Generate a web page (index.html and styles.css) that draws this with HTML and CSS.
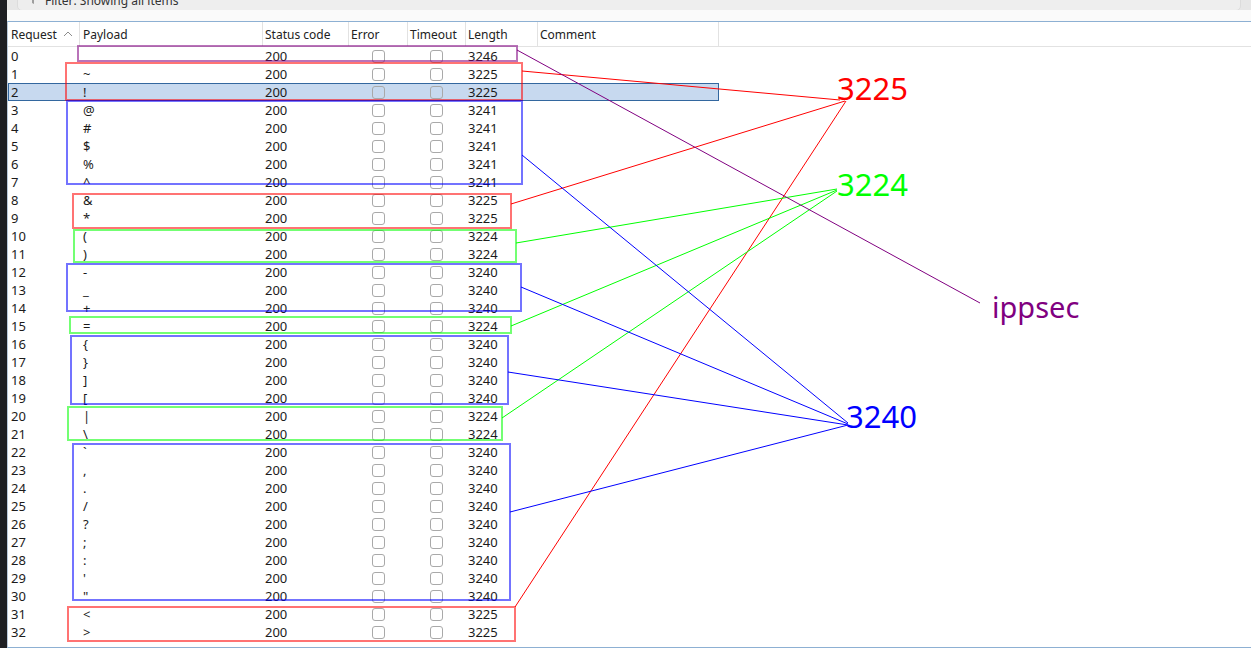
FILE: index.html
```html
<!DOCTYPE html>
<html>
<head>
<meta charset="utf-8">
<link rel="stylesheet" href="styles.css">
</head>
<body>
<div class="app">
  <div class="edge"></div>
  <div class="main">
    <div class="filterbar">
      <div class="filter">
        <svg class="funnel" width="6" height="10" viewBox="0 0 6 10"><path d="M0.5 0.5 H5.5 L3.8 4 V9 L2.2 8 V4 Z" fill="#8a8a8a"/></svg>
        <span>Filter: Showing all items</span>
      </div>
    </div>
    <div class="gap"></div>
    <div class="table">
      <div class="thead">
        <div class="th">Request<svg class="sort" width="10" height="6" viewBox="0 0 10 6"><polyline points="1,5 5,1 9,5" fill="none" stroke="#8c8c8c" stroke-width="1"/></svg></div>
        <div class="th">Payload</div>
        <div class="th tight">Status code</div>
        <div class="th tight">Error</div>
        <div class="th tight">Timeout</div>
        <div class="th tight">Length</div>
        <div class="th tight">Comment</div>
        <div class="th filler"></div>
      </div>
      <div class="tbody">
        <div class="row"><span>0</span><span></span><span>200</span><span class="cb"><i></i></span><span class="cb"><i></i></span><span>3246</span><span></span></div>
        <div class="row"><span>1</span><span>~</span><span>200</span><span class="cb"><i></i></span><span class="cb"><i></i></span><span>3225</span><span></span></div>
        <div class="row sel"><span>2</span><span>!</span><span>200</span><span class="cb"><i></i></span><span class="cb"><i></i></span><span>3225</span><span></span></div>
        <div class="row"><span>3</span><span>@</span><span>200</span><span class="cb"><i></i></span><span class="cb"><i></i></span><span>3241</span><span></span></div>
        <div class="row"><span>4</span><span>#</span><span>200</span><span class="cb"><i></i></span><span class="cb"><i></i></span><span>3241</span><span></span></div>
        <div class="row"><span>5</span><span>$</span><span>200</span><span class="cb"><i></i></span><span class="cb"><i></i></span><span>3241</span><span></span></div>
        <div class="row"><span>6</span><span>%</span><span>200</span><span class="cb"><i></i></span><span class="cb"><i></i></span><span>3241</span><span></span></div>
        <div class="row"><span>7</span><span>^</span><span>200</span><span class="cb"><i></i></span><span class="cb"><i></i></span><span>3241</span><span></span></div>
        <div class="row"><span>8</span><span>&amp;</span><span>200</span><span class="cb"><i></i></span><span class="cb"><i></i></span><span>3225</span><span></span></div>
        <div class="row"><span>9</span><span>*</span><span>200</span><span class="cb"><i></i></span><span class="cb"><i></i></span><span>3225</span><span></span></div>
        <div class="row"><span>10</span><span>(</span><span>200</span><span class="cb"><i></i></span><span class="cb"><i></i></span><span>3224</span><span></span></div>
        <div class="row"><span>11</span><span>)</span><span>200</span><span class="cb"><i></i></span><span class="cb"><i></i></span><span>3224</span><span></span></div>
        <div class="row"><span>12</span><span>-</span><span>200</span><span class="cb"><i></i></span><span class="cb"><i></i></span><span>3240</span><span></span></div>
        <div class="row"><span>13</span><span>_</span><span>200</span><span class="cb"><i></i></span><span class="cb"><i></i></span><span>3240</span><span></span></div>
        <div class="row"><span>14</span><span>+</span><span>200</span><span class="cb"><i></i></span><span class="cb"><i></i></span><span>3240</span><span></span></div>
        <div class="row"><span>15</span><span>=</span><span>200</span><span class="cb"><i></i></span><span class="cb"><i></i></span><span>3224</span><span></span></div>
        <div class="row"><span>16</span><span>{</span><span>200</span><span class="cb"><i></i></span><span class="cb"><i></i></span><span>3240</span><span></span></div>
        <div class="row"><span>17</span><span>}</span><span>200</span><span class="cb"><i></i></span><span class="cb"><i></i></span><span>3240</span><span></span></div>
        <div class="row"><span>18</span><span>]</span><span>200</span><span class="cb"><i></i></span><span class="cb"><i></i></span><span>3240</span><span></span></div>
        <div class="row"><span>19</span><span>[</span><span>200</span><span class="cb"><i></i></span><span class="cb"><i></i></span><span>3240</span><span></span></div>
        <div class="row"><span>20</span><span>|</span><span>200</span><span class="cb"><i></i></span><span class="cb"><i></i></span><span>3224</span><span></span></div>
        <div class="row"><span>21</span><span>\</span><span>200</span><span class="cb"><i></i></span><span class="cb"><i></i></span><span>3224</span><span></span></div>
        <div class="row"><span>22</span><span>`</span><span>200</span><span class="cb"><i></i></span><span class="cb"><i></i></span><span>3240</span><span></span></div>
        <div class="row"><span>23</span><span>,</span><span>200</span><span class="cb"><i></i></span><span class="cb"><i></i></span><span>3240</span><span></span></div>
        <div class="row"><span>24</span><span>.</span><span>200</span><span class="cb"><i></i></span><span class="cb"><i></i></span><span>3240</span><span></span></div>
        <div class="row"><span>25</span><span>/</span><span>200</span><span class="cb"><i></i></span><span class="cb"><i></i></span><span>3240</span><span></span></div>
        <div class="row"><span>26</span><span>?</span><span>200</span><span class="cb"><i></i></span><span class="cb"><i></i></span><span>3240</span><span></span></div>
        <div class="row"><span>27</span><span>;</span><span>200</span><span class="cb"><i></i></span><span class="cb"><i></i></span><span>3240</span><span></span></div>
        <div class="row"><span>28</span><span>:</span><span>200</span><span class="cb"><i></i></span><span class="cb"><i></i></span><span>3240</span><span></span></div>
        <div class="row"><span>29</span><span>'</span><span>200</span><span class="cb"><i></i></span><span class="cb"><i></i></span><span>3240</span><span></span></div>
        <div class="row"><span>30</span><span>"</span><span>200</span><span class="cb"><i></i></span><span class="cb"><i></i></span><span>3240</span><span></span></div>
        <div class="row"><span>31</span><span>&lt;</span><span>200</span><span class="cb"><i></i></span><span class="cb"><i></i></span><span>3225</span><span></span></div>
        <div class="row"><span>32</span><span>&gt;</span><span>200</span><span class="cb"><i></i></span><span class="cb"><i></i></span><span>3225</span><span></span></div>
      </div>
    </div>
  </div>
</div>
<svg class="annot" width="1251" height="648" viewBox="0 0 1251 648">
  <g fill="none" stroke-width="2" stroke-opacity="0.55">
    <rect x="78" y="46" width="439" height="15" stroke="#800080"/>
    <rect x="66" y="63" width="456" height="37" stroke="#ff0000"/>
    <rect x="67" y="101" width="455" height="83" stroke="#0000ff"/>
    <rect x="73" y="194" width="438" height="34" stroke="#ff0000"/>
    <rect x="74" y="230" width="442" height="32" stroke="#00ff00"/>
    <rect x="67" y="264" width="454" height="47" stroke="#0000ff"/>
    <rect x="70" y="317" width="441" height="16" stroke="#00ff00"/>
    <rect x="71" y="336" width="437" height="68" stroke="#0000ff"/>
    <rect x="68" y="407" width="434" height="33" stroke="#00ff00"/>
    <rect x="73" y="444" width="437" height="156" stroke="#0000ff"/>
    <rect x="68" y="607" width="447" height="34" stroke="#ff0000"/>
  </g>
  <g stroke-width="1" fill="none">
    <line x1="522" y1="71" x2="840" y2="100" stroke="#ff0000"/>
    <line x1="511" y1="204" x2="845" y2="101" stroke="#ff0000"/>
    <line x1="515" y1="607" x2="846" y2="101" stroke="#ff0000"/>
    <line x1="516" y1="243" x2="837" y2="189" stroke="#00ff00"/>
    <line x1="511" y1="326" x2="837" y2="190" stroke="#00ff00"/>
    <line x1="502" y1="418" x2="837" y2="191" stroke="#00ff00"/>
    <line x1="522" y1="155" x2="848" y2="423" stroke="#0000ff"/>
    <line x1="521" y1="287" x2="848" y2="424" stroke="#0000ff"/>
    <line x1="508" y1="372" x2="848" y2="425" stroke="#0000ff"/>
    <line x1="510" y1="512" x2="848" y2="425" stroke="#0000ff"/>
    <line x1="517" y1="50" x2="980" y2="303" stroke="#800080"/>
  </g>
  <text class="lbl" x="837" y="100" fill="#ff0000">3225</text>
  <text class="lbl" x="837" y="196" fill="#00ff00">3224</text>
  <text class="lbl" x="846" y="428" fill="#0000ff">3240</text>
  <text class="lbl small" x="992" y="318" fill="#800080">ippsec</text>
</svg>
</body>
</html>
```

FILE: styles.css
```css
html, body {
  margin: 0;
  padding: 0;
  overflow: hidden;
}

body {
  position: relative;
  width: 1251px;
  height: 648px;
  font-family: "Noto Sans", "Open Sans", sans-serif;
  color: #1b1b1b;
  background: #ffffff;
}

.app {
  display: flex;
  height: 648px;
}

.edge {
  width: 7px;
  flex: none;
  background: #1e1f23;
}

.main {
  flex: 1;
  display: flex;
  flex-direction: column;
  min-width: 0;
}

.filterbar {
  height: 10px;
  flex: none;
  overflow: hidden;
  background: #e7e7e7;
  padding: 0 10px;
}

.filter {
  margin-top: -11px;
  height: 20px;
  background: #eeeeee;
  border: 1px solid #dcdcdc;
  border-radius: 5px;
  display: flex;
  align-items: center;
  padding-left: 12px;
  font-size: 12px;
  color: #333;
}

.funnel {
  margin-right: 9px;
}

.gap {
  height: 11px;
  flex: none;
  background: #fafafa;
}

.table {
  flex: 1;
  border-top: 1px solid #8db0d3;
  border-bottom: 1px solid #8db0d3;
  border-left: 1px solid #b9c9db;
  background: #ffffff;
}

.thead {
  display: grid;
  grid-template-columns: 72px 183px 86px 59px 58px 72px 181px 1fr;
  height: 24px;
  border-bottom: 1px solid #e2e2e2;
  font-size: 12px;
  color: #222;
}

.th {
  display: flex;
  align-items: center;
  padding-left: 3px;
  border-right: 1px solid #e2e2e2;
  white-space: nowrap;
}

.th.tight {
  padding-left: 2px;
}

.th.filler {
  border-right: none;
}

.sort {
  margin-left: 6px;
}

.row {
  display: grid;
  grid-template-columns: 72px 183px 86px 59px 58px 72px 181px;
  width: 711px;
  height: 18px;
  align-items: center;
  font-size: 13px;
  line-height: 18px;
}

.row > span {
  padding-left: 2px;
  white-space: pre;
}

.row > span:nth-child(1),
.row > span:nth-child(2) {
  padding-left: 3px;
}

.row.sel {
  background: #c7d9ef;
  outline: 1px solid #33679f;
  outline-offset: -1px;
}

.row > .cb {
  padding-left: 0;
  display: flex;
  justify-content: center;
  align-items: center;
}

.cb i {
  display: block;
  width: 13px;
  height: 13px;
  box-sizing: border-box;
  border: 1px solid #a9a9a9;
  border-radius: 3px;
  margin-left: -1px;
}

.annot {
  position: absolute;
  top: 0;
  left: 0;
  pointer-events: none;
}

.lbl {
  font-family: "Noto Sans", sans-serif;
  font-size: 31px;
}

.lbl.small {
  font-size: 29px;
}
```
